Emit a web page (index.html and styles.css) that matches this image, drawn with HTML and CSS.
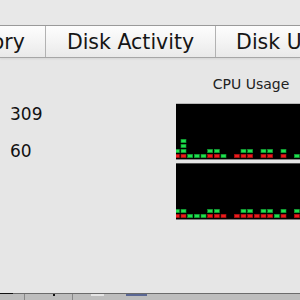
FILE: index.html
```html
<!DOCTYPE html>
<html>
<head>
<meta charset="utf-8">
<link rel="stylesheet" href="styles.css">
</head>
<body>
<div class="window">
  <div class="toolbar"></div>
  <div class="tabs">
    <div class="tab first">Memory</div>
    <div class="tab">Disk Activity</div>
    <div class="tab">Disk Usage</div>
    <div class="tab">Network</div>
  </div>
  <div class="content">
    <div class="stats">
      <div class="val">309</div>
      <div class="val">60</div>
    </div>
    <div class="cpu">
      <div class="cpu-label">CPU Usage</div>
      <div class="graph">
        <svg width="150" height="55" viewBox="0 0 150 55">
          <rect class="r" x="-1.67" y="50.3" width="5" height="3.4"/><rect class="g" x="-1.67" y="45.3" width="5" height="3.4"/>
          <rect class="r" x="5" y="50.3" width="5" height="3.4"/><rect class="g" x="5" y="45.3" width="5" height="3.4"/><rect class="g" x="5" y="40.3" width="5" height="3.4"/><rect class="g" x="5" y="35.3" width="5" height="3.4"/>
          <rect class="g" x="11.67" y="50.3" width="5" height="3.4"/>
          <rect class="g" x="18.33" y="50.3" width="5" height="3.4"/>
          <rect class="g" x="25" y="50.3" width="5" height="3.4"/>
          <rect class="r" x="31.67" y="50.3" width="5" height="3.4"/><rect class="g" x="31.67" y="45.3" width="5" height="3.4"/>
          <rect class="r" x="38.33" y="50.3" width="5" height="3.4"/><rect class="g" x="38.33" y="45.3" width="5" height="3.4"/>
          <rect class="g" x="45" y="50.3" width="5" height="3.4"/>
          <rect class="r" x="58.33" y="50.3" width="5" height="3.4"/>
          <rect class="r" x="65" y="50.3" width="5" height="3.4"/><rect class="g" x="65" y="45.3" width="5" height="3.4"/>
          <rect class="r" x="71.67" y="50.3" width="5" height="3.4"/><rect class="g" x="71.67" y="45.3" width="5" height="3.4"/>
          <rect class="r" x="85" y="50.3" width="5" height="3.4"/><rect class="g" x="85" y="45.3" width="5" height="3.4"/>
          <rect class="r" x="91.67" y="50.3" width="5" height="3.4"/><rect class="g" x="91.67" y="45.3" width="5" height="3.4"/>
          <rect class="r" x="105" y="50.3" width="5" height="3.4"/><rect class="g" x="105" y="45.3" width="5" height="3.4"/>
          <rect class="g" x="118.33" y="50.3" width="5" height="3.4"/>
          <rect class="r" x="125" y="50.3" width="5" height="3.4"/>
          <rect class="r" x="131.67" y="50.3" width="5" height="3.4"/><rect class="g" x="131.67" y="45.3" width="5" height="3.4"/>
        </svg>
      </div>
      <div class="graph second">
        <svg width="150" height="55" viewBox="0 0 150 55">
          <rect class="r" x="-1.67" y="50.3" width="5" height="3.4"/><rect class="g" x="-1.67" y="45.3" width="5" height="3.4"/>
          <rect class="r" x="5" y="50.3" width="5" height="3.4"/><rect class="g" x="5" y="45.3" width="5" height="3.4"/>
          <rect class="g" x="11.67" y="50.3" width="5" height="3.4"/>
          <rect class="g" x="18.33" y="50.3" width="5" height="3.4"/>
          <rect class="g" x="25" y="50.3" width="5" height="3.4"/>
          <rect class="r" x="31.67" y="50.3" width="5" height="3.4"/><rect class="g" x="31.67" y="45.3" width="5" height="3.4"/>
          <rect class="r" x="38.33" y="50.3" width="5" height="3.4"/><rect class="g" x="38.33" y="45.3" width="5" height="3.4"/>
          <rect class="r" x="45" y="50.3" width="5" height="3.4"/>
          <rect class="r" x="58.33" y="50.3" width="5" height="3.4"/>
          <rect class="r" x="65" y="50.3" width="5" height="3.4"/><rect class="g" x="65" y="45.3" width="5" height="3.4"/>
          <rect class="r" x="71.67" y="50.3" width="5" height="3.4"/><rect class="g" x="71.67" y="45.3" width="5" height="3.4"/>
          <rect class="r" x="78.33" y="50.3" width="5" height="3.4"/>
          <rect class="r" x="85" y="50.3" width="5" height="3.4"/><rect class="g" x="85" y="45.3" width="5" height="3.4"/>
          <rect class="r" x="91.67" y="50.3" width="5" height="3.4"/><rect class="g" x="91.67" y="45.3" width="5" height="3.4"/>
          <rect class="g" x="98.33" y="50.3" width="5" height="3.4"/>
          <rect class="r" x="105" y="50.3" width="5" height="3.4"/><rect class="g" x="105" y="45.3" width="5" height="3.4"/>
          <rect class="r" x="118.33" y="50.3" width="5" height="3.4"/><rect class="g" x="118.33" y="45.3" width="5" height="3.4"/>
          <rect class="r" x="125" y="50.3" width="5" height="3.4"/>
          <rect class="g" x="131.67" y="50.3" width="5" height="3.4"/>
        </svg>
      </div>
    </div>
  </div>
  <div class="footer">
    <span class="mark black"></span>
    <span class="mark vline m1"></span>
    <span class="mark dot m2"></span>
    <span class="mark vline m3"></span>
    <span class="mark light m4"></span>
    <span class="mark blue m5"></span>
  </div>
</div>
</body>
</html>
```

FILE: styles.css
```css
html, body {
  margin: 0;
  padding: 0;
  width: 300px;
  height: 300px;
  overflow: hidden;
  background: #e6e6e6;
}
.window {
  display: flex;
  flex-direction: column;
  width: 300px;
  height: 300px;
  font-family: "DejaVu Sans", "Liberation Sans", sans-serif;
  color: #111;
}
.toolbar {
  height: 25px;
  background: #e8e8e8;
  flex-shrink: 0;
}
.tabs {
  display: flex;
  flex-shrink: 0;
  height: 31px;
  border-top: 1px solid #9a9a9a;
  border-bottom: 1px solid #a6a6a6;
  background: linear-gradient(#fdfdfd, #f4f4f4 50%, #e9e9e9);
  box-shadow: 0 1px 2px rgba(0,0,0,0.08);
  white-space: nowrap;
}
.tab {
  flex-shrink: 0;
  padding: 1.5px 20.5px 0;
  font-size: 20.5px;
  line-height: 29.5px;
  border-right: 1px solid #b2b2b2;
  color: #151515;
}
.tab.first {
  margin-left: -79px;
}
.content {
  flex: 1;
  display: flex;
  overflow: hidden;
}
.stats {
  width: 166px;
  flex-shrink: 0;
  padding: 46px 0 0 10px;
  display: flex;
  flex-direction: column;
  gap: 17px;
}
.val {
  font-size: 17px;
  line-height: 20px;
  color: #111;
}
.cpu {
  width: 150px;
  flex-shrink: 0;
  padding-top: 17.6px;
  display: flex;
  flex-direction: column;
}
.cpu-label {
  font-size: 14px;
  line-height: 17px;
  text-align: center;
  margin-bottom: 10.4px;
  color: #222;
}
.graph {
  height: 55px;
  background: #000;
  border-top: 1px solid #b8b8b8;
  border-bottom: 1px solid #858585;
}
.graph.second {
  margin-top: 3px;
  border-top-color: #505050;
  border-bottom-color: #7a7a7a;
}
.graph svg {
  display: block;
}
.r {
  fill: #ee1a1c;
  stroke: #a30f10;
  stroke-width: 0.6;
}
.g {
  fill: #1ee14f;
  stroke: #0f962f;
  stroke-width: 0.6;
}
.footer {
  height: 6px;
  flex-shrink: 0;
  border-top: 1px solid #6b6b6b;
  background: #bdbdbd;
  display: flex;
  align-items: flex-start;
}
.mark {
  display: block;
  flex-shrink: 0;
}
.black {
  width: 13px;
  height: 1px;
  background: #111;
  margin-top: -1px;
}
.vline {
  width: 1px;
  height: 6px;
  background: #888;
}
.m1 { margin-left: 11px; }
.dot {
  width: 2px;
  height: 2px;
  background: #111;
  margin-left: 28px;
}
.m3 { margin-left: 17px; }
.light {
  width: 13px;
  height: 2px;
  background: #e4e4e4;
  margin-left: 18px;
}
.blue {
  width: 21px;
  height: 2px;
  background: #5b6894;
  margin-left: 22px;
}
```
